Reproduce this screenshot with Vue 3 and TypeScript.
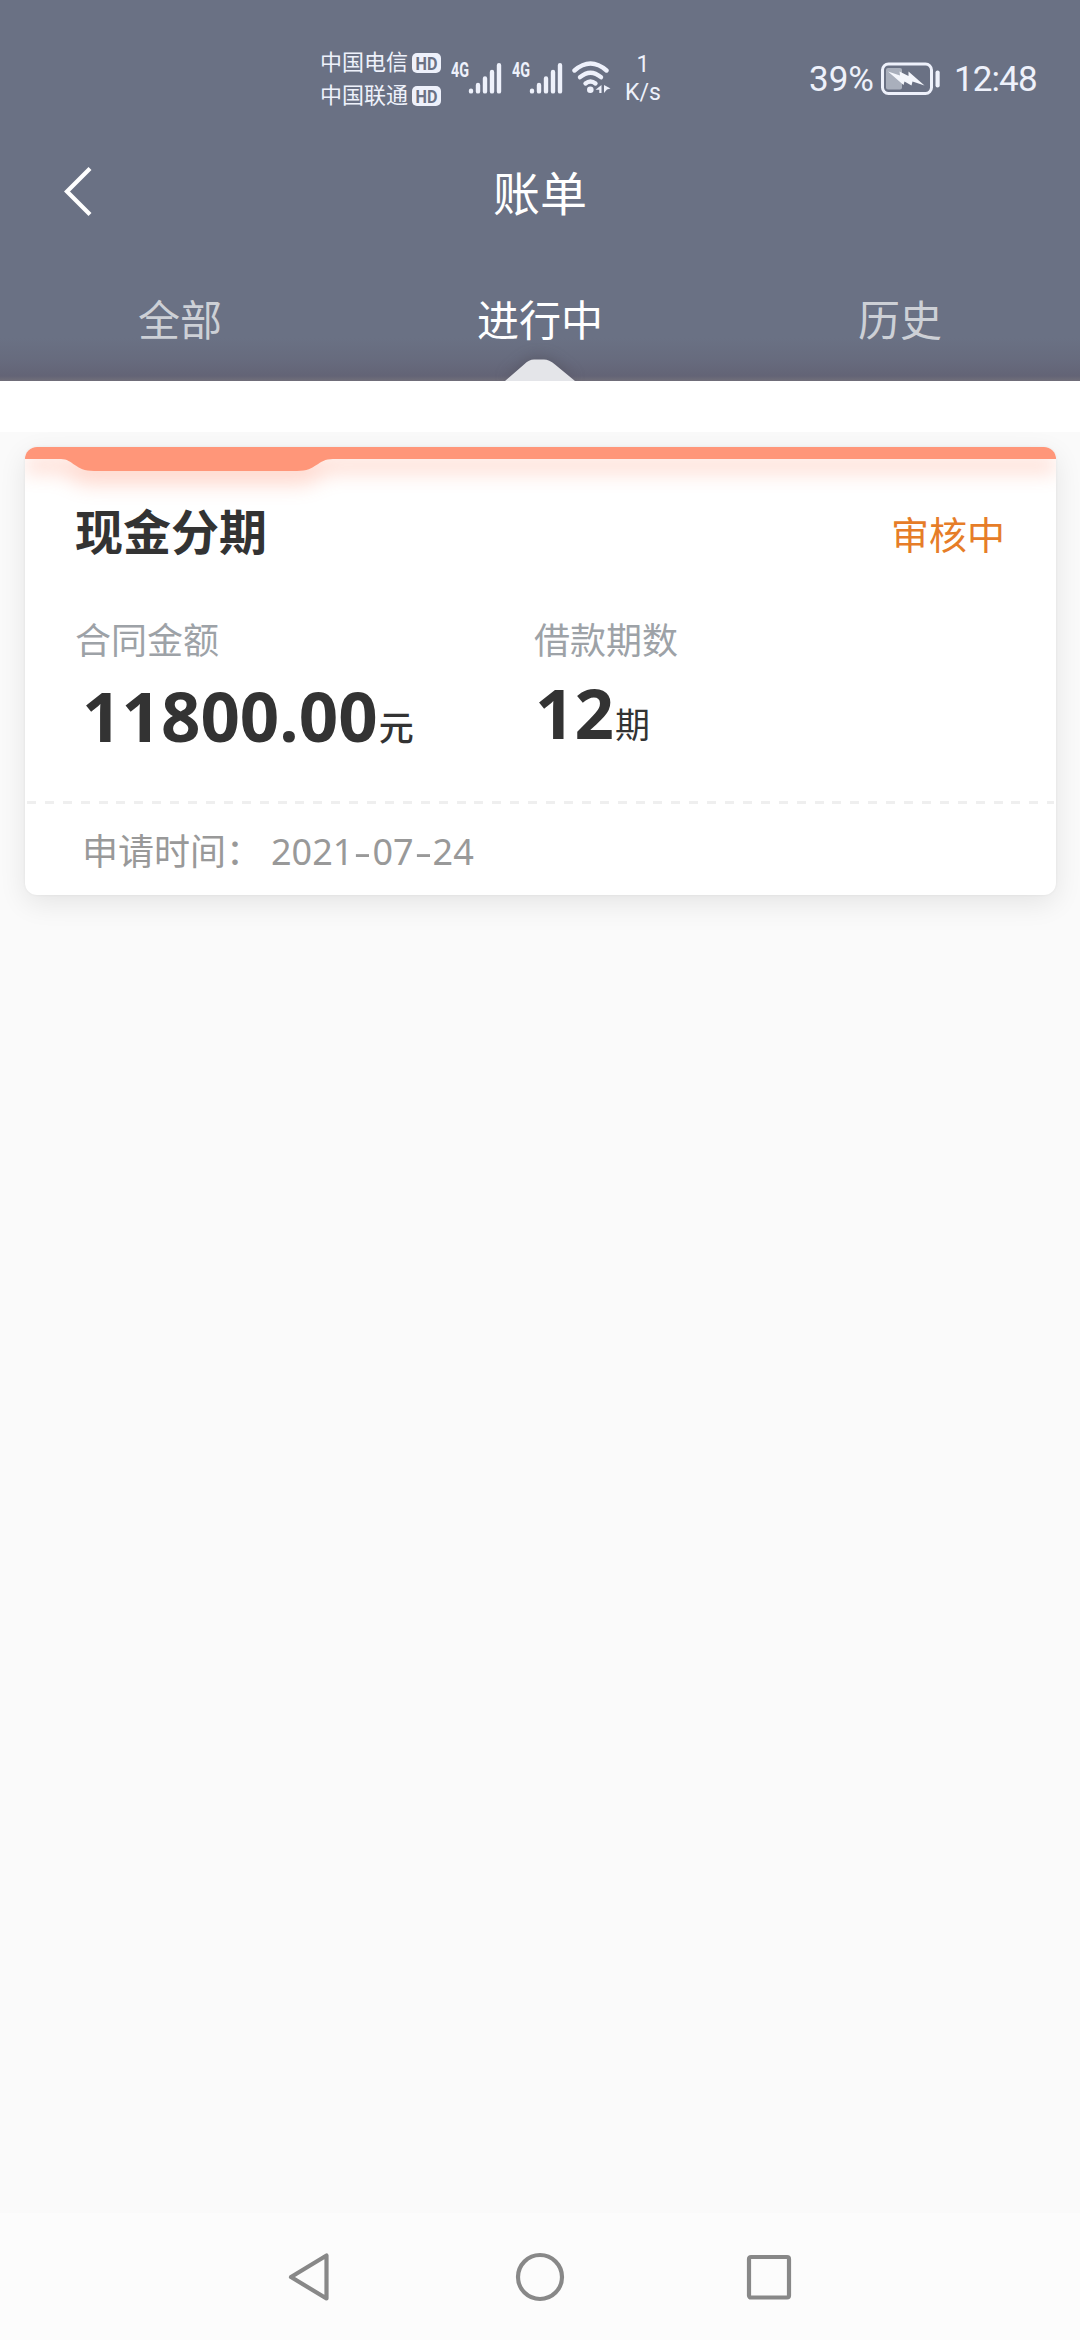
<script setup lang="ts">
interface Tab {
  label: string
  active: boolean
}

const carriers: string[] = ['中国电信', '中国联通']
const tabs: Tab[] = [
  { label: '全部', active: false },
  { label: '进行中', active: true },
  { label: '历史', active: false },
]
const bill = {
  name: '现金分期',
  status: '审核中',
  amount: '11800.00',
  periods: '12',
  date: ['2021', '07', '24'],
}
</script>

<template>
  <div class="screen">
    <header class="header">
      <div class="status-bar">
        <div class="carriers">
          <div v-for="c in carriers" :key="c" class="carrier">
            <span>{{ c }}</span>
            <svg class="hd" width="29" height="20" viewBox="0 0 29 20">
              <rect width="29" height="20" rx="5" fill="#eef1fb" />
              <text x="3.5" y="16.5" textLength="22" lengthAdjust="spacingAndGlyphs">HD</text>
            </svg>
          </div>
        </div>
        <svg v-for="n in 2" :key="n" class="signal" width="51" height="44" viewBox="0 -10 51 44">
          <text x="0" y="16" textLength="18" lengthAdjust="spacingAndGlyphs">4G</text>
          <g stroke="#eef1fb" stroke-width="4.4" stroke-linecap="round">
            <path d="M20 29.8v.6M27 24v6.4M34 17.5v12.9M41 11v19.4M48 4.2v26.2" />
          </g>
        </svg>
        <svg class="wifi" width="40" height="34" viewBox="0 0 40 34">
          <g fill="none" stroke="#eef1fb" stroke-width="4.4" stroke-linecap="round">
            <path d="M2.5 10.5Q18.5-3.5 34.5 10.5" />
            <path d="M8 17.2Q18.5 8.2 29 17.2" />
            <path d="M13.5 23.5Q18.5 19.5 23.5 23.5" />
          </g>
          <circle cx="18.3" cy="29.8" r="3.3" fill="#eef1fb" />
          <path d="M29.5 25v8h-2.200v-3.200h-3.800zM32 25l6.500 3.600-3.500 1-3 3.400z" fill="#eef1fb" />
        </svg>
        <div class="speed">
          <span>1</span>
          <span>K/s</span>
        </div>
        <span class="percent">39%</span>
        <svg class="battery" width="62" height="36" viewBox="0 0 62 36">
          <rect x="2.5" y="3" width="49" height="29.5" rx="6" fill="none" stroke="#eef1fb" stroke-width="3" />
          <rect x="6" y="7" width="16" height="21.5" rx="2" fill="#a9afbc" />
          <path d="M8 10.5L20 14.5 19.500 10.500 28.500 15 28.500 10.500 44.500 24.500 32.500 20.500 31.500 24.500 24.500 20.500 23.500 24z" fill="#f4f6fc" />
          <rect x="55.5" y="9.5" width="4.2" height="17" rx="2" fill="#eef1fb" />
        </svg>
        <span class="clock">12:48</span>
      </div>

      <div class="title-bar">
        <svg class="back" width="34" height="56" viewBox="0 0 34 56">
          <path d="M27 5.500L4 28.500 27 51.500" fill="none" stroke="#fff" stroke-width="4.200" />
        </svg>
        <h1>账单</h1>
      </div>

      <nav class="tabs">
        <div v-for="t in tabs" :key="t.label" class="tab" :class="{ active: t.active }">
          <span>{{ t.label }}</span>
          <svg v-if="t.active" class="pointer" width="76" height="22" viewBox="0 0 76 22">
            <path d="M3 22L22 5.500Q27 .5 32 .5H42Q47 .5 53 5.500L73 22z" fill="#e4e5e9" />
          </svg>
        </div>
      </nav>
    </header>

    <div class="strip"></div>

    <main class="content">
      <article class="card">
        <div class="card-top">
          <svg width="1031" height="62" viewBox="0 0 1031 62">
            <defs>
              <filter id="glow" x="-5%" y="-100%" width="110%" height="400%">
                <feGaussianBlur stdDeviation="10" />
              </filter>
            </defs>
            <path d="M0 0H1031V14H310C294 14 292 26 274 26H66C48 26 44 14 36 14H0z" transform="translate(0 11)" fill="#ff9679" opacity=".38" filter="url(#glow)" />
            <path d="M0 0H1031V12H308C292 12 292 24 272 24H69C50 24 48 12 36 12H0z" fill="#ff9679" />
          </svg>
        </div>
        <div class="card-head">
          <h2>{{ bill.name }}</h2>
          <span class="state">{{ bill.status }}</span>
        </div>
        <div class="figures">
          <section class="figure amount">
            <p class="label">合同金额</p>
            <p class="value"><b>{{ bill.amount }}</b><span>元</span></p>
          </section>
          <section class="figure periods">
            <p class="label">借款期数</p>
            <p class="value"><b>{{ bill.periods }}</b><span>期</span></p>
          </section>
        </div>
        <div class="divider"></div>
        <footer class="applied">
          <span>申请时间：</span>
          <span class="date">
            <template v-for="(part, i) in bill.date" :key="i"><i v-if="i > 0">-</i>{{ part }}</template>
          </span>
        </footer>
      </article>
    </main>

    <nav class="system-nav">
      <svg width="50" height="56" viewBox="0 0 50 56">
        <path d="M40.500 6.500V49.500L5 28z" />
      </svg>
      <svg width="50" height="56" viewBox="0 0 50 56">
        <circle cx="25" cy="28" r="22" />
      </svg>
      <svg width="50" height="56" viewBox="0 0 50 56">
        <rect x="5" y="8" width="40" height="40.5" rx="2" />
      </svg>
    </nav>
  </div>
</template>

<style>
body {
  background: #fafafa;
}
</style>

<style scoped>
.screen {
  display: flex;
  flex-direction: column;
  width: 1080px;
  height: 2340px;
  overflow: hidden;
  background: #fafafa;
  font-family: "Noto Sans", "Noto Sans CJK SC", sans-serif;
}

svg {
  display: block;
  flex: none;
}

h1,
h2,
p {
  margin: 0;
}

.header {
  height: 381px;
  flex: none;
  display: flex;
  flex-direction: column;
  color: #fff;
  background:
    linear-gradient(to bottom, rgba(98, 98, 116, 0) 338px, rgba(98, 98, 116, 0.4) 360px, rgba(98, 98, 116, 0.9) 376px, #716f7a 381px),
    #6a7184;
}

.status-bar {
  height: 142px;
  box-sizing: border-box;
  padding: 46px 0 0 320px;
  display: flex;
  align-items: flex-start;
  color: #eef1fb;
  font-family: Roboto, "Noto Sans CJK SC", sans-serif;
}

.carriers {
  width: 131px;
}

.carrier {
  display: flex;
  align-items: center;
  gap: 4px;
  height: 33px;
  font-size: 22px;
  line-height: 33px;
}

.hd text {
  font: 700 18px Roboto, sans-serif;
  fill: #6a7184;
}

.signal {
  margin: 5px 10px 0 0;
}

.signal text {
  font: 700 20px Roboto, sans-serif;
  fill: #eef1fb;
}

.wifi {
  margin: 14px 0 0 -1px;
}

.speed {
  display: flex;
  flex-direction: column;
  align-items: center;
  width: 40px;
  margin: 5px 0 0 11px;
  font-size: 23px;
  line-height: 28px;
}

.percent,
.clock {
  font-size: 35px;
  line-height: 40px;
  margin-top: 14px;
}

.percent {
  width: 72px;
  margin-left: 146px;
}

.clock {
  letter-spacing: -0.9px;
}

.battery {
  margin: 15px 12px 0 -1px;
}

.title-bar {
  height: 104px;
  display: flex;
  align-items: center;
}

.back {
  margin: -6px 0 0 63px;
}

.title-bar h1 {
  flex: 1;
  margin: -3px 97px 0 0;
  text-align: center;
  font-size: 47px;
  line-height: 60px;
  font-weight: 400;
}

.tabs {
  flex: 1;
  display: flex;
}

.tab {
  position: relative;
  flex: 1;
  text-align: center;
  padding-top: 43px;
  font-size: 42px;
  line-height: 62px;
  color: #cdd0d6;
}

.tab.active {
  color: #fff;
}

.pointer {
  position: absolute;
  left: 142px;
  bottom: 0;
  filter: drop-shadow(0 -2px 7px rgba(70, 64, 76, 0.4));
}

.strip {
  position: relative;
  height: 51px;
  flex: none;
  background: #fff;
}

.content {
  flex: 1;
  padding: 15px 24px 0 25px;
}

.card {
  width: 1031px;
  height: 448px;
  border-radius: 12px;
  background: #fff;
  box-shadow: 0 8px 28px rgba(0, 0, 0, 0.09), 0 0 3px rgba(0, 0, 0, 0.06);
}

.card-top {
  height: 62px;
  overflow: hidden;
  border-radius: 12px 12px 0 0;
}

.card-head {
  display: flex;
  justify-content: space-between;
  padding: 0 51px 0 50px;
  height: 105px;
}

.card-head h2 {
  margin-top: -7px;
  font-size: 48px;
  line-height: 60px;
  font-weight: 700;
  color: #333;
}

.state {
  margin-top: -7px;
  font-size: 38px;
  line-height: 64px;
  color: #e67d28;
}

.figures {
  display: flex;
  height: 187px;
  padding-left: 50px;
}

.amount {
  width: 459px;
}

.label {
  font-size: 36px;
  line-height: 54px;
  color: #9da2a7;
}

.value {
  display: flex;
  align-items: baseline;
  margin-top: -3px;
  color: #333;
}

.value b {
  font-size: 69px;
  line-height: 94px;
  font-weight: 700;
}

.value span {
  font-size: 35px;
  line-height: 50px;
  padding-bottom: 1px;
  margin-left: 1px;
  transform: translateY(-1px);
}

.amount .value {
  padding: 3px 0 0 7px;
}

.amount .value span {
  font-weight: 500;
}

.periods .value {
  padding-left: 1px;
}

.divider {
  height: 3px;
  margin: 0 2px;
  background: repeating-linear-gradient(to right, #efefef 0 9px, transparent 9px 17.9px);
}

.applied {
  display: flex;
  padding: 21px 0 0 57px;
  font-size: 36px;
  line-height: 54px;
  color: #999;
}

.date {
  margin-left: 9px;
}

.date i {
  display: inline-block;
  width: 19px;
  text-align: center;
  font-style: normal;
  transform: scaleX(1.5);
}

.system-nav {
  height: 127px;
  flex: none;
  display: flex;
  gap: 179px;
  justify-content: center;
  align-items: center;
  background: #fcfcfc;
}

.system-nav svg {
  fill: none;
  stroke: #888;
  stroke-width: 4.2;
  stroke-linejoin: round;
}
</style>
